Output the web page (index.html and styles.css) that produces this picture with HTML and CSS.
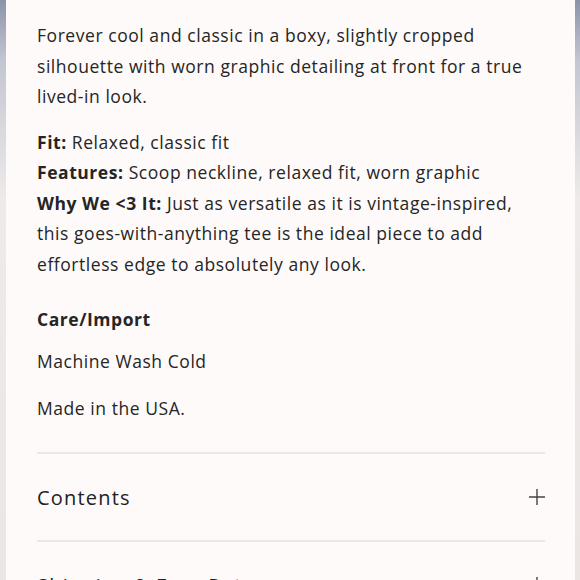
FILE: index.html
```html
<!DOCTYPE html>
<html>
<head>
<meta charset="utf-8">
<link rel="stylesheet" href="styles.css">
</head>
<body>
<div class="frame">
  <div class="card">
    <p class="para first">Forever cool and classic in a boxy, slightly cropped silhouette with worn graphic detailing at front for a true lived-in look.</p>
    <p class="para details"><b>Fit:</b> Relaxed, classic fit<br><b>Features:</b> Scoop neckline, relaxed fit, worn graphic<br><b>Why We &lt;3 It:</b> Just as versatile as it is vintage-inspired, this goes-with-anything tee is the ideal piece to add effortless edge to absolutely any look.</p>
    <h3 class="care">Care/Import</h3>
    <p class="para wash">Machine Wash Cold</p>
    <p class="para made">Made in the USA.</p>
    <div class="acc">
      <div class="acc-row">
        <span class="acc-title">Contents</span>
        <svg class="plus" width="16" height="16" viewBox="0 0 16 16"><path d="M8 0V16M0 8H16" stroke="#444" stroke-width="1.4" fill="none"/></svg>
      </div>
      <div class="acc-row">
        <span class="acc-title">Shipping &amp; Free Returns</span>
        <svg class="plus" width="16" height="16" viewBox="0 0 16 16"><path d="M8 0V16M0 8H16" stroke="#444" stroke-width="1.4" fill="none"/></svg>
      </div>
    </div>
  </div>
</div>
</body>
</html>
```
FILE: styles.css
```css
html, body {
  margin: 0;
  padding: 0;
  height: 580px;
  overflow: hidden;
}
body {
  background: linear-gradient(180deg, #8a93aa 0px, #c3c6d1 60px, #eeeae9 200px, #ebe6e4 580px);
  font-family: "Open Sans", "Liberation Sans", sans-serif;
  color: #252525;
}
.frame {
  padding: 0 5px 0 6px;
  height: 580px;
}
.card {
  background: #fdfaf9;
  height: 580px;
  padding: 20px 30px 0 31px;
  box-sizing: border-box;
  overflow: hidden;
}
.para {
  margin: 0;
  font-size: 17.5px;
  line-height: 30.5px;
  letter-spacing: 0.55px;
  max-width: 505px;
}
.para b {
  font-weight: 700;
}
.details {
  margin-top: 15px;
}
.care {
  margin: 25px 0 0;
  font-size: 17.5px;
  line-height: 30px;
  font-weight: 700;
  letter-spacing: 0.55px;
}
.wash {
  margin-top: 12px;
}
.made {
  margin-top: 16px;
}
.acc {
  margin-top: 29px;
  border-top: 2px solid #ebe7e5;
}
.acc-row {
  display: flex;
  align-items: center;
  justify-content: space-between;
  height: 86px;
  border-bottom: 2px solid #ebe7e5;
}
.acc-title {
  font-size: 20px;
  letter-spacing: 1.2px;
  color: #222;
}
```
